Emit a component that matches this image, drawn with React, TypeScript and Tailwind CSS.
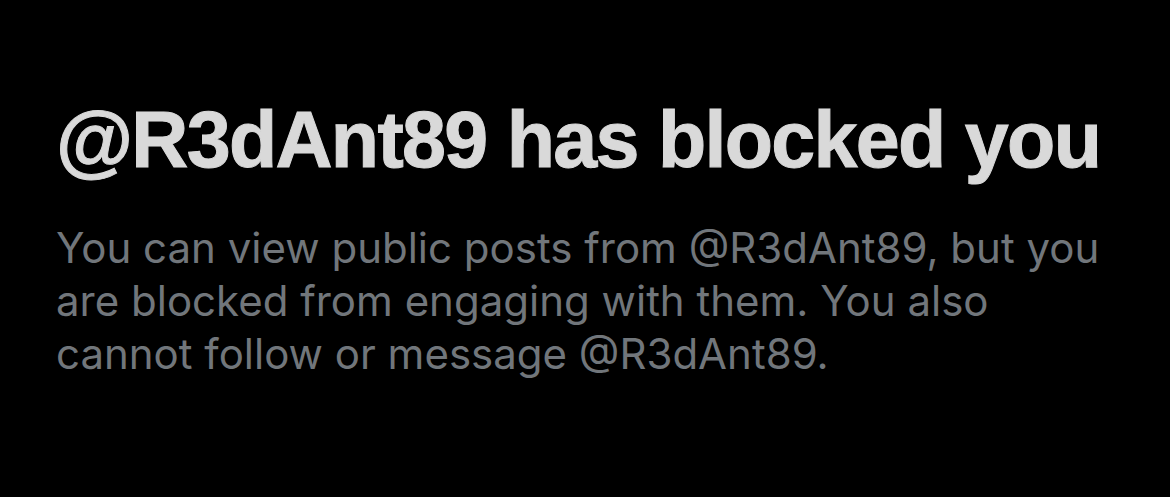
export default function App() {
  return (
    <div className="flex h-[497px] w-[1170px] flex-col overflow-hidden bg-black pl-[56px] pt-[100px]">
      <h1 className="whitespace-nowrap font-['Liberation_Sans',Arial,sans-serif] text-[79px] font-bold leading-none tracking-[-1.7px] text-[#d9d9d9] [-webkit-text-stroke:1px_#d9d9d9]">
        @R3dAnt89 has blocked you
      </h1>
      <p className="mt-[42px] font-['Inter','Noto_Sans',sans-serif] text-[42px] leading-[53px] text-[#71767b]">
        You can view public posts from @R3dAnt89, but you
        <br />
        are blocked from engaging with them. You also
        <br />
        cannot follow or message @R3dAnt89.
      </p>
    </div>
  )
}
